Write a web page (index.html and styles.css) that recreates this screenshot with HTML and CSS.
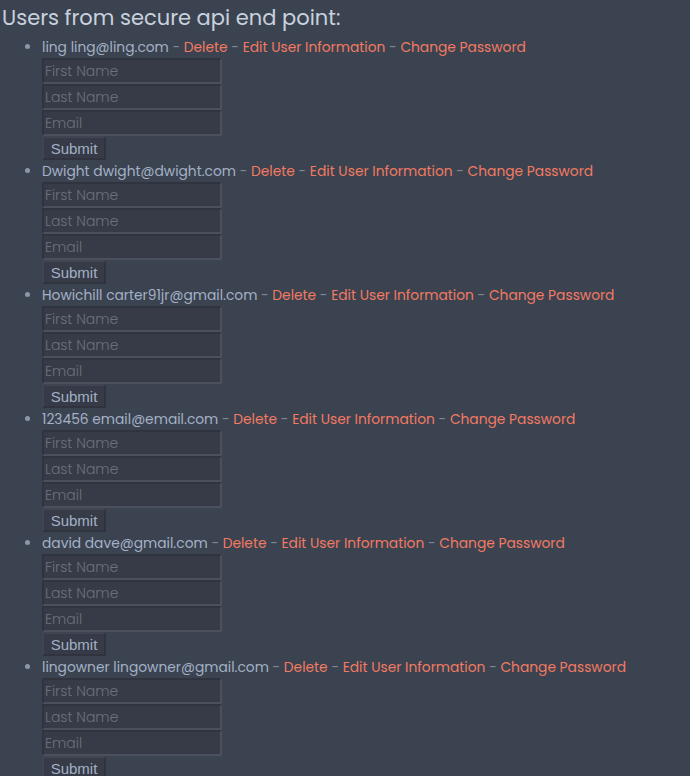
FILE: index.html
```html
<!DOCTYPE html>
<html>
<head>
<meta charset="utf-8">
<link rel="stylesheet" href="styles.css">
</head>
<body>
<div class="title">Users from secure api end point:</div>
<ul class="users">
  <li class="user">
    <div class="line">ling ling@ling.com <span class="sep">-</span> <a class="act">Delete</a> <span class="sep">-</span> <a class="act">Edit User Information</a> <span class="sep">-</span> <a class="act">Change Password</a></div>
    <form class="form"><input class="field" placeholder="First Name"><input class="field" placeholder="Last Name"><input class="field" placeholder="Email"><button class="submit" type="button">Submit</button></form>
  </li>
  <li class="user">
    <div class="line">Dwight dwight@dwight.com <span class="sep">-</span> <a class="act">Delete</a> <span class="sep">-</span> <a class="act">Edit User Information</a> <span class="sep">-</span> <a class="act">Change Password</a></div>
    <form class="form"><input class="field" placeholder="First Name"><input class="field" placeholder="Last Name"><input class="field" placeholder="Email"><button class="submit" type="button">Submit</button></form>
  </li>
  <li class="user">
    <div class="line">Howichill carter91jr@gmail.com <span class="sep">-</span> <a class="act">Delete</a> <span class="sep">-</span> <a class="act">Edit User Information</a> <span class="sep">-</span> <a class="act">Change Password</a></div>
    <form class="form"><input class="field" placeholder="First Name"><input class="field" placeholder="Last Name"><input class="field" placeholder="Email"><button class="submit" type="button">Submit</button></form>
  </li>
  <li class="user">
    <div class="line">123456 email@email.com <span class="sep">-</span> <a class="act">Delete</a> <span class="sep">-</span> <a class="act">Edit User Information</a> <span class="sep">-</span> <a class="act">Change Password</a></div>
    <form class="form"><input class="field" placeholder="First Name"><input class="field" placeholder="Last Name"><input class="field" placeholder="Email"><button class="submit" type="button">Submit</button></form>
  </li>
  <li class="user">
    <div class="line">david dave@gmail.com <span class="sep">-</span> <a class="act">Delete</a> <span class="sep">-</span> <a class="act">Edit User Information</a> <span class="sep">-</span> <a class="act">Change Password</a></div>
    <form class="form"><input class="field" placeholder="First Name"><input class="field" placeholder="Last Name"><input class="field" placeholder="Email"><button class="submit" type="button">Submit</button></form>
  </li>
  <li class="user">
    <div class="line">lingowner lingowner@gmail.com <span class="sep">-</span> <a class="act">Delete</a> <span class="sep">-</span> <a class="act">Edit User Information</a> <span class="sep">-</span> <a class="act">Change Password</a></div>
    <form class="form"><input class="field" placeholder="First Name"><input class="field" placeholder="Last Name"><input class="field" placeholder="Email"><button class="submit" type="button">Submit</button></form>
  </li>
</ul>
</body>
</html>
```
FILE: styles.css
```css
html, body {
  margin: 0;
  padding: 0;
  background: #3c4350;
}
body {
  font-family: "Poppins", "Open Sans", sans-serif;
  color: #a3b1c6;
  font-size: 14px;
}
.title {
  font-size: 21px;
  line-height: 36px;
  padding-left: 2px;
  color: #c8d2df;
}
.users {
  margin: 0;
  padding: 0 0 0 42px;
}
.user {
  line-height: 22px;
}
.user::marker {
  color: #8a97aa;
}
.line {
  white-space: nowrap;
  font-size: 13.8px;
  padding-top: 1px;
  height: 21px;
}
.sep {
  color: #7d8796;
}
.act {
  color: #f27a62;
}
.form {
  margin: 0;
}
.field {
  display: block;
  box-sizing: border-box;
  width: 180px;
  height: 26px;
  margin: 0;
  padding: 1px 1px;
  background: #363b47;
  border-style: solid;
  border-width: 2px;
  border-color: #2f343f #4a505c #4a505c #2f343f;
  font-family: "Poppins", "Open Sans", sans-serif;
  font-size: 14px;
  font-weight: 300;
  color: #a3b1c6;
}
.field::placeholder {
  color: #6c717b;
}
.submit {
  display: block;
  box-sizing: border-box;
  width: 64px;
  height: 24px;
  margin: 0;
  padding: 0;
  background: #363b47;
  border-style: solid;
  border-width: 2px;
  border-color: #3f4552 #2f343f #2f343f #3f4552;
  font-family: "Liberation Sans", Arial, sans-serif;
  font-size: 15px;
  color: #a3b1c6;
}
```
